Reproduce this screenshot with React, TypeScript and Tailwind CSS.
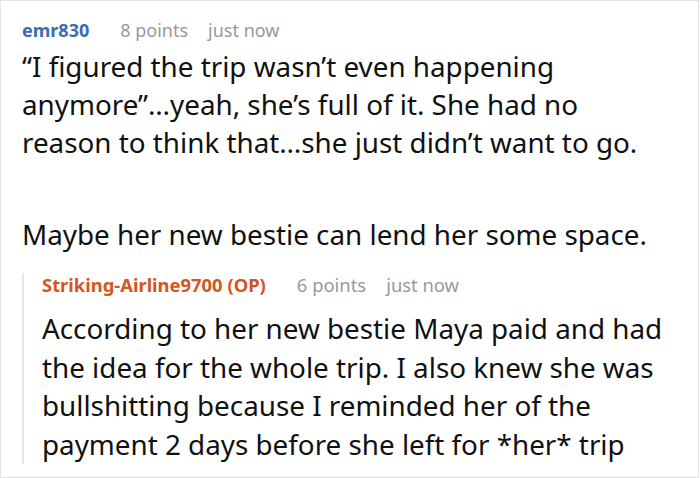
import React from 'react';

const font = { fontFamily: '"Noto Sans", "Open Sans", sans-serif' };

const Meta: React.FC<{ points: string }> = ({ points }) => (
  <>
    <span className="ml-[31px]">{points}</span>
    <span className="ml-[20px]">just now</span>
  </>
);

export default function App() {
  return (
    <div
      className="w-[699px] h-[478px] border border-[#e3e3e3] bg-white overflow-hidden text-[#111]"
      style={font}
    >
      {/* top comment */}
      <div className="pl-[21px] pt-[17px]">
        <div className="flex items-baseline text-[18px] leading-[24px] text-[#999] whitespace-nowrap">
          <span className="font-bold text-[#3a6cb4]">emr830</span>
          <Meta points="8 points" />
        </div>
        <div className="mt-[5px] text-[27.8px] leading-[38px] whitespace-nowrap">
          <p>
            “I figured the trip wasn’t even happening
            <br />
            anymore”…yeah, she’s full of it. She had no
            <br />
            reason to think that…she just didn’t want to go.
          </p>
          <p className="mt-[54px]">Maybe her new bestie can lend her some space.</p>
        </div>
      </div>

      {/* reply */}
      <div className="ml-[21px] mt-[20px] border-l-2 border-[#e6e6e6] pl-[18px]">
        <div className="flex items-baseline text-[18.4px] leading-[24px] text-[#999] whitespace-nowrap">
          <span className="font-bold text-[#d4561f]">Striking-Airline9700 (OP)</span>
          <Meta points="6 points" />
        </div>
        <div className="mt-[12px] text-[27.8px] leading-[38.7px] whitespace-nowrap">
          <p>
            According to her new bestie Maya paid and had
            <br />
            the idea for the whole trip. I also knew she was
            <br />
            bullshitting because I reminded her of the
            <br />
            payment 2 days before she left for *her* trip
          </p>
        </div>
      </div>
    </div>
  );
}
